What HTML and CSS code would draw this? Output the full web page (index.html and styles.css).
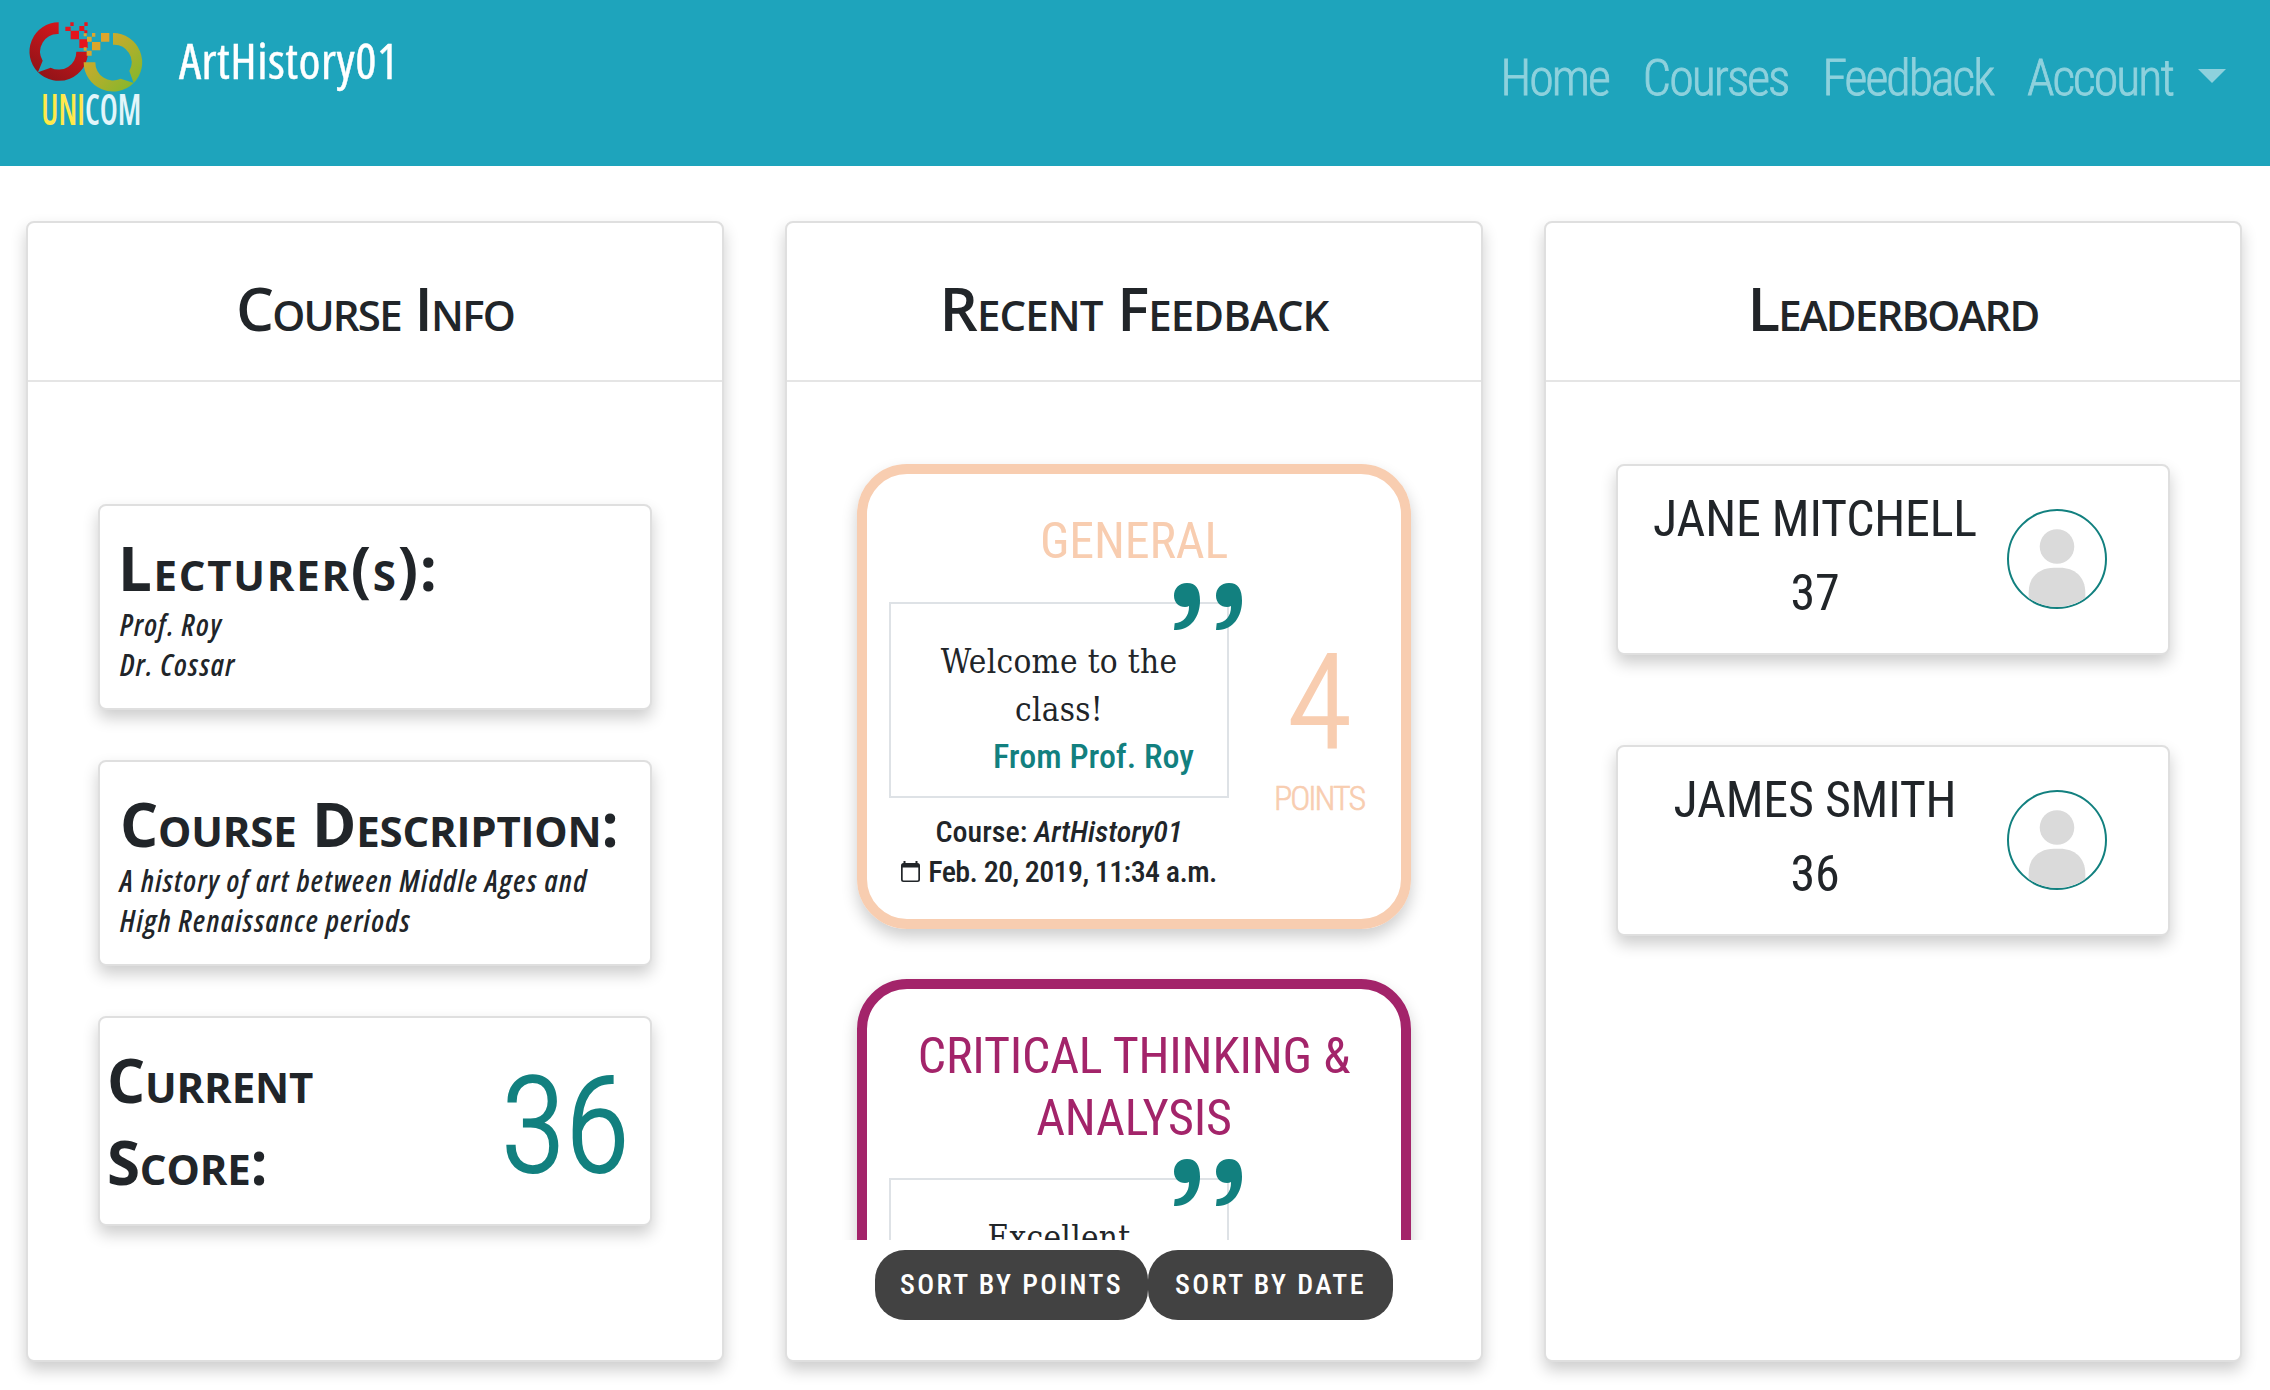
FILE: index.html
```html
<!DOCTYPE html>
<html lang="en">
<head>
<meta charset="utf-8">
<title>ArtHistory01</title>
<link rel="stylesheet" href="styles.css">
</head>
<body>
<svg class="defs" aria-hidden="true">
  <symbol id="quote" viewBox="42 22 204 141">
    <path id="mark" d="M120 75C120 40 108 22 81 22C56 22 42 40 42 60C42 80 56 94 75 94C80 94 84 93 87 91C88 120 72 141 44 143L42 163C90 165 120 125 120 75Z"/>
    <use href="#mark" x="126"/>
  </symbol>
  <symbol id="avatar" viewBox="0 0 100 100">
    <g fill="#dadada"><circle cx="50" cy="37" r="18"/><path d="M20.500 100V85C20.500 68 32 59 47 59H53C68 59 79.500 68 79.500 85V100Z"/></g>
  </symbol>
</svg>
<nav class="navbar">
  <a class="brand">
    <svg class="logo" viewBox="0 0 390 360">
      <defs>
        <linearGradient id="red" x1="0.800" y1="0" x2="0.200" y2="1"><stop offset="0" stop-color="#e0161c"/><stop offset="1" stop-color="#8c1418"/></linearGradient>
        <linearGradient id="gold" x1="0.200" y1="0.200" x2="0.900" y2="0.900"><stop offset="0" stop-color="#d1a92c"/><stop offset="1" stop-color="#84b72c"/></linearGradient>
      </defs>
      <path fill="url(#red)" d="M116 22A88 88 0 0 0 54 172L68 137A53 53 0 0 1 116 57ZM204 110A88 88 0 0 1 54 172L92 158A53 53 0 0 0 169 110Z"/>
      <path fill="url(#gold)" d="M279 54A88 88 0 0 1 341 204L328 168A53 53 0 0 0 279 89ZM191 142A88 88 0 0 0 341 204L302 191A53 53 0 0 1 226 142Z"/>
      <path fill="#e5151d" d="M136 35h16v13h-16zM151 22h10v11h-10zM152 47h25v26h-25zM178 33h15v15h-15zM193 22h10v11h-10zM193 46h9v9h-9zM178 73h25v26h-25z"/>
      <path fill="#dda62c" d="M243 54h25v26h-25zM216 81h25v25h-25zM201 65h14v15h-14zM216 54h10v11h-10zM200 107h15v15h-15zM191 97h9v10h-9zM191 55h9v9h-9z"/>
      <text class="logo-text" x="64" y="330" textLength="300" lengthAdjust="spacingAndGlyphs"><tspan fill="#ffe94a">UNI</tspan><tspan fill="#e2f5fa">COM</tspan></text>
    </svg>
    <span class="brand-name">ArtHistory01</span>
  </a>
  <div class="links">
    <a>Home</a>
    <a>Courses</a>
    <a>Feedback</a>
    <a>Account<i class="caret"></i></a>
  </div>
</nav>

<main class="columns">
  <section class="panel">
    <h2 class="panel-title">Course Info</h2>
    <div class="info">
      <div class="card lecturers">
        <h3>Lecturer(s):</h3>
        <p>Prof. Roy</p>
        <p>Dr. Cossar</p>
      </div>
      <div class="card">
        <h3>Course Description:</h3>
        <p>A history of art between Middle Ages and High Renaissance periods</p>
      </div>
      <div class="card score">
        <h3>Current Score:</h3>
        <span class="score-value">36</span>
      </div>
    </div>
  </section>

  <section class="panel">
    <h2 class="panel-title feedback-title">Recent Feedback</h2>
    <div class="feed">
      <article class="feedback general">
        <h4>GENERAL</h4>
        <div class="feedback-row">
          <div class="message">
            <blockquote>
              <svg class="quote"><use href="#quote"/></svg>
              <p>Welcome to the class!</p>
              <footer>From Prof. Roy</footer>
            </blockquote>
            <p class="meta">Course: <em>ArtHistory01</em></p>
            <p class="meta date"><svg class="calendar" viewBox="0 0 19 21"><path d="M2.500 0h2v2h10v-2h2v2a2.500 2.500 0 0 1 2.500 2.500v14a2.500 2.500 0 0 1-2.500 2.500h-14a2.500 2.500 0 0 1-2.500-2.500v-14a2.500 2.500 0 0 1 2.500-2.500zM1.700 6.500v12a1 1 0 0 0 1 1h13.600a1 1 0 0 0 1-1v-12z" fill-rule="evenodd"/></svg>Feb. 20, 2019, 11:34 a.m.</p>
          </div>
          <div class="points"><b>4</b><span>POINTS</span></div>
        </div>
      </article>
      <article class="feedback critical">
        <h4>CRITICAL THINKING &amp; ANALYSIS</h4>
        <div class="feedback-row">
          <div class="message">
            <blockquote>
              <svg class="quote"><use href="#quote"/></svg>
              <p>Excellent</p>
            </blockquote>
          </div>
        </div>
      </article>
    </div>
    <div class="sort">
      <button class="by-points">SORT BY POINTS</button>
      <button class="by-date">SORT BY DATE</button>
    </div>
  </section>

  <section class="panel">
    <h2 class="panel-title">Leaderboard</h2>
    <div class="leaders">
      <div class="card leader">
        <p><span>JANE MITCHELL</span><span>37</span></p>
        <svg class="avatar"><use href="#avatar"/></svg>
      </div>
      <div class="card leader">
        <p><span>JAMES SMITH</span><span>36</span></p>
        <svg class="avatar"><use href="#avatar"/></svg>
      </div>
    </div>
  </section>
</main>
</body>
</html>
```
FILE: styles.css
```css
* { box-sizing: border-box; }
body, h2, h3, h4, p, blockquote { margin: 0; }
body {
  height: 1390px;
  overflow: hidden;
  background: #fff;
  color: #212529;
  font-family: Roboto, sans-serif;
  font-stretch: 75%;
}
.defs { display: none; }

/* Navigation */
.navbar {
  display: flex;
  justify-content: space-between;
  height: 166px;
  padding: 15px 44px 0 20px;
  background: #1ea4bc;
}
.brand { display: flex; gap: 29px; color: #fff; }
.logo { width: 130px; height: 120px; }
.logo-text { font: 600 130px "Open Sans", sans-serif; font-stretch: 75%; }
.brand-name {
  padding-top: 8px;
  font: 400 50px/75px "Open Sans", sans-serif;
  font-stretch: 75%;
  letter-spacing: 0.5px;
  -webkit-text-stroke: 0.4px;
}
.links {
  display: flex;
  gap: 34px;
  padding-top: 28px;
  color: #8ed1dd;
  font-size: 50px;
  font-weight: 300;
  line-height: 71px;
  letter-spacing: -2px;
  -webkit-text-stroke: 0.8px;
}
.caret {
  display: inline-block;
  margin-left: 25px;
  vertical-align: 12px;
  border: 14px solid transparent;
  border-top-color: #8ed1dd;
  border-bottom: 0;
}

/* Panels */
.columns {
  display: grid;
  grid-template-columns: repeat(3, 1fr);
  gap: 61px;
  padding: 55px 28px 0 26px;
}
.panel, .card {
  border: 2px solid #dfdfdf;
  border-radius: 8px;
  background: #fff;
  box-shadow: 0 8px 16px rgba(0, 0, 0, 0.2);
}
.panel { height: 1141px; }
.panel-title {
  height: 159px;
  padding-top: 43px;
  border-bottom: 2px solid #e5e5e5;
  font: small-caps 600 60px/84px "Open Sans", sans-serif;
  letter-spacing: -1.8px;
  text-align: center;
}
.feedback-title { letter-spacing: -0.9px; }
h3 {
  font: small-caps 700 60px/70px "Open Sans", sans-serif;
  letter-spacing: -0.2px;
}

/* Course info */
.info { display: grid; gap: 50px; padding: 122px 70px 0; }
.info .card { height: 206px; padding: 27px 26px 0 20px; }
.info p {
  position: relative;
  top: 2px;
  font: italic 600 30px/40px "Open Sans", sans-serif;
  font-stretch: 75%;
  letter-spacing: 1.4px;
}
.lecturers h3 { margin-left: -2px; letter-spacing: 1.7px; }
.info .score {
  display: flex;
  justify-content: space-between;
  align-items: center;
  height: 210px;
  padding: 0 20px 0 7px;
}
.score h3 { width: 260px; line-height: 82px; }
.score-value {
  padding-top: 12px;
  color: #12807f;
  font-size: 133px;
  font-weight: 300;
  line-height: 160px;
  -webkit-text-stroke: 2px;
}

/* Feedback list */
.feed { height: 858px; margin: 0 55px; padding: 82px 15px 0; overflow: hidden; }
.feedback {
  height: 465px;
  margin-bottom: 50px;
  padding: 36px 22px 0;
  border: 10px solid;
  border-radius: 50px;
  box-shadow: 0 8px 16px rgba(0, 0, 0, 0.2);
}
.general { border-color: #f8cdb0; color: #f8cdb0; }
.critical { border-color: #a3246a; color: #a3246a; }
.feedback h4 {
  margin-bottom: 30px;
  font-size: 50px;
  font-weight: 400;
  line-height: 62px;
  letter-spacing: -0.2px;
  text-align: center;
}
.critical h4 { margin-bottom: 29px; }
.feedback-row { display: flex; gap: 46px; }
.message { width: 340px; color: #212529; text-align: center; }
blockquote {
  position: relative;
  height: 196px;
  padding: 34px 33px 0;
  border: 2px solid #dee2e6;
}
blockquote p {
  font: 33px/48px "DejaVu Serif Condensed", "DejaVu Serif", serif;
  letter-spacing: 0.3px;
}
blockquote footer {
  margin-top: -2px;
  color: #12807f;
  font-size: 34px;
  font-weight: 500;
  line-height: 48px;
  text-align: right;
}
.quote {
  position: absolute;
  top: -21px;
  right: -15px;
  width: 68px;
  height: 47px;
  fill: #12807f;
}
.meta {
  font-size: 30px;
  font-weight: 500;
  line-height: 40px;
  white-space: nowrap;
}
blockquote + .meta { margin-top: 14px; }
.date { letter-spacing: -0.6px; }
.calendar { width: 19px; height: 21px; margin-right: 8px; fill: #212529; }
.points {
  display: flex;
  flex-direction: column;
  align-items: center;
  width: 88px;
  padding-top: 35px;
  font-weight: 300;
}
.points b {
  font-size: 132px;
  font-weight: 300;
  line-height: 132px;
  -webkit-text-stroke: 2px;
}
.points span {
  margin-top: 4px;
  font-size: 34px;
  line-height: 50px;
  letter-spacing: -2px;
  -webkit-text-stroke: 0.6px;
}

.sort { display: flex; justify-content: center; padding-top: 10px; }
.sort button {
  height: 70px;
  padding: 0 0 2px;
  border: 0;
  border-radius: 30px;
  background: #424242;
  color: #fff;
  font: 500 28px Roboto, sans-serif;
  font-stretch: 75%;
  letter-spacing: 2.4px;
}
.by-points { width: 273px; }
.by-date { width: 245px; }

/* Leaderboard */
.leaders { display: grid; gap: 90px; padding: 82px 70px 0; }
.leader {
  display: flex;
  align-items: flex-start;
  gap: 17px;
  height: 191px;
  padding-left: 22px;
}
.leader p {
  display: flex;
  flex-direction: column;
  width: 350px;
  padding-top: 16px;
  font-size: 50px;
  line-height: 74px;
  letter-spacing: -0.2px;
  text-align: center;
}
.avatar {
  width: 100px;
  height: 100px;
  margin-top: 43px;
  border: 2px solid #12807f;
  border-radius: 50%;
}
```
